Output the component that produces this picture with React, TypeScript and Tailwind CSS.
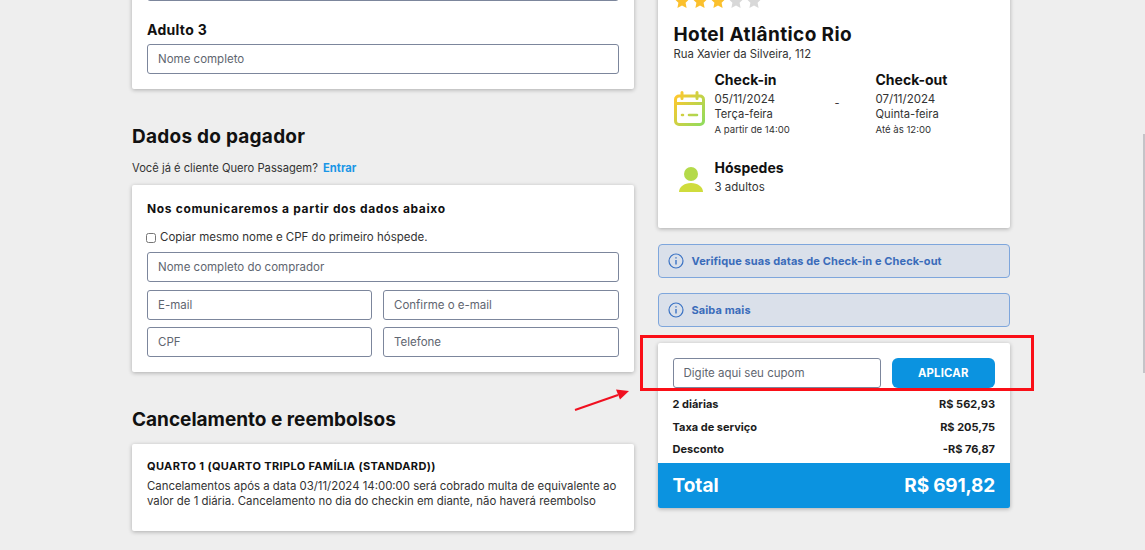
import React from "react";

const Field = ({ placeholder, className = "" }: { placeholder: string; className?: string }) => (
  <input
    placeholder={placeholder}
    className={`h-[30px] min-w-0 rounded-[3px] border border-[#7c869c] bg-white px-[10px] text-[11.5px] text-[#333] placeholder:text-[#5f6670] ${className}`}
  />
);

const Card = ({ className = "", children }: { className?: string; children: React.ReactNode }) => (
  <div className={`rounded-[2px] bg-white shadow-[0_1px_4px_rgba(0,0,0,0.28)] ${className}`}>{children}</div>
);

const Star = ({ on }: { on: boolean }) => (
  <svg width="16" height="16" viewBox="0 0 24 24" className={on ? "fill-[#fbc02d]" : "fill-[#d8d8d8]"}>
    <path d="M12 1l3.4 7.3 7.6.9-5.6 5.4 1.5 7.9-6.9-3.9-6.9 3.9 1.5-7.9L1 9.2l7.6-.9z" />
  </svg>
);

const CalendarIcon = () => (
  <svg width="31" height="35" viewBox="0 0 31 35" fill="none" className="mt-[10px] shrink-0">
    <defs>
      <linearGradient id="cal" gradientUnits="userSpaceOnUse" x1="0" y1="8" x2="31" y2="32">
        <stop offset="0" stopColor="#fdc82f" />
        <stop offset="1" stopColor="#8fdc5e" />
      </linearGradient>
    </defs>
    <rect x="1.5" y="5" width="28" height="28.5" rx="3.5" stroke="url(#cal)" strokeWidth="3" />
    <path d="M1.5 12.5h28" stroke="url(#cal)" strokeWidth="3" />
    <path d="M8 1.5v6M23 1.5v6" stroke="url(#cal)" strokeWidth="3" strokeLinecap="round" />
    <path d="M8 24h1M15 24h8" stroke="url(#cal)" strokeWidth="2.6" strokeLinecap="round" />
  </svg>
);

const PersonIcon = () => (
  <svg width="24" height="25" viewBox="0 0 24 25" className="mt-[8px] shrink-0">
    <circle cx="12" cy="7" r="7" fill="#b4da4a" />
    <path d="M0 25c0-5 5-9 12-9s12 4 12 9z" fill="#cfdc3c" />
  </svg>
);

const InfoIcon = () => (
  <svg width="16" height="16" viewBox="0 0 16 16" fill="none" stroke="#3a72c4" strokeWidth="1.2" className="shrink-0">
    <circle cx="8" cy="8" r="7" />
    <path d="M8 7v4.5" strokeWidth="1.4" />
    <path d="M8 4.2v1.4" strokeWidth="1.4" />
  </svg>
);

const Notice = ({ text }: { text: string }) => (
  <div className="flex h-[34px] items-center gap-[8px] rounded-[4px] border border-[#7ea6dc] bg-[#dae0ea] pl-[9px]">
    <InfoIcon />
    <span className="text-[11px] font-bold tracking-[0.1px] text-[#3a6cba]">{text}</span>
  </div>
);

const PriceRow = ({ label, value }: { label: string; value: string }) => (
  <div className="flex h-[22.5px] items-center justify-between text-[11px] font-bold text-[#1c1c1c]">
    <span>{label}</span>
    <span>{value}</span>
  </div>
);

const App: React.FC = () => {
  return (
    <div className="relative flex h-[550px] gap-[23.5px] overflow-hidden bg-[#eeeeee] pl-[132px] font-['Inter',sans-serif] text-[#333]">
      {/* left column */}
      <div className="w-[502px] shrink-0">
        <Card className="-mt-[20px] px-[15px] pb-[15px]">
          <div className="h-[21px] rounded-[3px] border border-[#7c869c]" />
          <div className="mb-[5px] mt-[20px] text-[14px] font-bold leading-[18px] tracking-[0.3px] text-[#111]">Adulto 3</div>
          <Field placeholder="Nome completo" className="w-full" />
        </Card>

        <h2 className="mt-[34px] text-[19px] font-bold leading-[28px] tracking-[0.25px] text-[#111]">Dados do pagador</h2>
        <p className="mt-[9px] text-[11.2px] leading-[16px]">
          Você já é cliente Quero Passagem? <a className="ml-[2px] font-bold text-[#1a96e6]">Entrar</a>
        </p>
        <Card className="mt-[9px] p-[15px]">
          <div className="text-[12px] font-bold leading-[18px] tracking-[0.65px] text-[#111]">Nos comunicaremos a partir dos dados abaixo</div>
          <label className="mt-[11px] flex h-[18px] items-center gap-[4px] text-[11.5px]">
            <input type="checkbox" className="m-0 -ml-px h-[10px] w-[10px]" />
            Copiar mesmo nome e CPF do primeiro hóspede.
          </label>
          <div className="mt-[5px] flex flex-col gap-[7.5px]">
            <Field placeholder="Nome completo do comprador" className="w-full" />
            <div className="grid grid-cols-[225px_236px] gap-[11px]">
              <Field placeholder="E-mail" />
              <Field placeholder="Confirme o e-mail" />
            </div>
            <div className="grid grid-cols-[225px_236px] gap-[11px]">
              <Field placeholder="CPF" />
              <Field placeholder="Telefone" />
            </div>
          </div>
        </Card>

        <h2 className="mt-[34px] text-[19px] font-bold leading-[28px] text-[#111]">Cancelamento e reembolsos</h2>
        <Card className="mt-[10px] h-[87px] px-[15px] pt-[14px]">
          <div className="text-[11px] font-bold leading-[16px] tracking-[0.35px] text-[#111]">QUARTO 1 (QUARTO TRIPLO FAMÍLIA (STANDARD))</div>
          <p className="mt-[5px] text-[11.4px] leading-[15px]">
            Cancelamentos após a data 03/11/2024 14:00:00 será cobrado multa de equivalente ao valor de 1 diária. Cancelamento no dia do checkin em diante, não haverá reembolso
          </p>
        </Card>
      </div>

      {/* right column */}
      <div className="w-[352.5px] shrink-0">
        <Card className="-mt-[20px] h-[248px] px-[16px]">
          <div className="flex gap-[2px] pt-[13px]">
            {[true, true, true, false, false].map((on, i) => (
              <Star key={i} on={on} />
            ))}
          </div>
          <h3 className="mt-[13px] text-[19px] font-bold leading-[25px] tracking-[0.4px] text-[#111]">Hotel Atlântico Rio</h3>
          <div className="text-[11.3px] leading-[14px]">Rua Xavier da Silveira, 112</div>
          <div className="mt-[9px] flex items-center">
            <CalendarIcon />
            <div className="ml-[10px] w-[122px]">
              <div className="mb-[3px] text-[14px] font-bold leading-[19px] text-[#111]">Check-in</div>
              <div className="text-[11.5px] leading-[15px]">05/11/2024</div>
              <div className="text-[11.2px] leading-[15px]">Terça-feira</div>
              <div className="text-[9.6px] leading-[15px]">A partir de 14:00</div>
            </div>
            <div className="w-[39px] text-[11px]">
              <span className="-ml-[2px] inline-block">-</span>
            </div>
            <div>
              <div className="mb-[3px] text-[14px] font-bold leading-[19px] text-[#111]">Check-out</div>
              <div className="text-[11.5px] leading-[15px]">07/11/2024</div>
              <div className="text-[11.2px] leading-[15px]">Quinta-feira</div>
              <div className="text-[9.6px] leading-[15px]">Até às 12:00</div>
            </div>
          </div>
          <div className="mt-[22px] flex items-start">
            <div className="flex w-[41px] justify-start pl-[5px]">
              <PersonIcon />
            </div>
            <div>
              <div className="text-[14px] font-bold leading-[18px] text-[#111]">Hóspedes</div>
              <div className="mt-[1px] text-[11.5px] leading-[18px]">3 adultos</div>
            </div>
          </div>
        </Card>

        <div className="mt-[16px] flex flex-col gap-[15px]">
          <Notice text="Verifique suas datas de Check-in e Check-out" />
          <Notice text="Saiba mais" />
        </div>

        <Card className="mt-[16px] overflow-hidden">
          <div className="px-[15px] pt-[15px]">
            <div className="flex gap-[11px]">
              <Field placeholder="Digite aqui seu cupom" className="w-[208px]" />
              <button className="h-[30px] flex-1 rounded-[6px] bg-[#0b93e0] text-[11.3px] font-bold tracking-[0.2px] text-white">APLICAR</button>
            </div>
            <div className="mt-[5px] pb-[2px]">
              <PriceRow label="2 diárias" value="R$ 562,93" />
              <PriceRow label="Taxa de serviço" value="R$ 205,75" />
              <PriceRow label="Desconto" value="-R$ 76,87" />
            </div>
          </div>
          <div className="flex h-[45px] items-center justify-between bg-[#0b93e0] px-[15px] pt-[3px] text-[19px] font-bold text-white">
            <span>Total</span>
            <span className="tracking-[-0.2px]">R$ 691,82</span>
          </div>
        </Card>
      </div>

      {/* annotation over the page */}
      <div className="absolute left-[640px] top-[335px] h-[56px] w-[394px] border-[3px] border-[#fa0f17]" />
      <svg className="absolute left-[570px] top-[385px]" width="64" height="30" viewBox="0 0 64 30">
        <path d="M5 25L48 10" stroke="#f01020" strokeWidth="2" />
        <path d="M59 6L46 4.5l4 10z" fill="#f01020" />
      </svg>
      {/* scrollbar thumb */}
      <div className="absolute right-0 top-[134px] h-[239px] w-[2px] bg-[#c4c4c8]" />
    </div>
  );
};

export default App;
